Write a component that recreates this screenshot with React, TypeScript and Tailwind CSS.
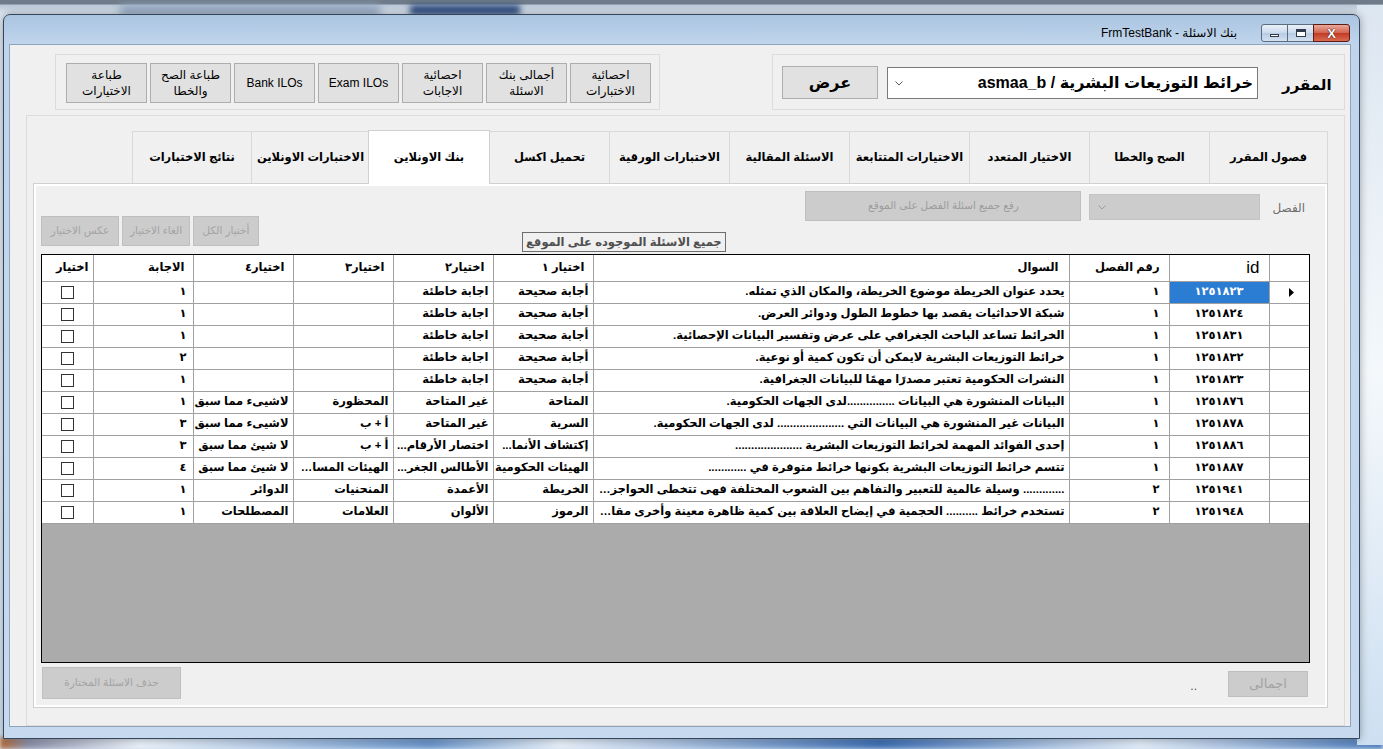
import React from "react";

type Row = {
  id: string;
  ch: string;
  q: string;
  a1: string;
  a2: string;
  a3: string;
  a4: string;
  ans: string;
};

const ROWS: Row[] = [
  { id: "١٢٥١٨٢٣", ch: "١", q: "يحدد عنوان الخريطة موضوع الخريطة، والمكان الذي تمثله.", a1: "أجابة صحيحة", a2: "اجابة خاطئة", a3: "", a4: "", ans: "١" },
  { id: "١٢٥١٨٢٤", ch: "١", q: "شبكة الاحداثيات يقصد بها خطوط الطول ودوائر العرض.", a1: "أجابة صحيحة", a2: "اجابة خاطئة", a3: "", a4: "", ans: "١" },
  { id: "١٢٥١٨٣١", ch: "١", q: "الخرائط تساعد الباحث الجغرافي على عرض وتفسير البيانات الإحصائية.", a1: "أجابة صحيحة", a2: "اجابة خاطئة", a3: "", a4: "", ans: "١" },
  { id: "١٢٥١٨٣٢", ch: "١", q: "خرائط التوزيعات البشرية لايمكن أن تكون كمية أو نوعية.", a1: "أجابة صحيحة", a2: "اجابة خاطئة", a3: "", a4: "", ans: "٢" },
  { id: "١٢٥١٨٣٣", ch: "١", q: "النشرات الحكومية تعتبر مصدرًا مهمًا للبيانات الجغرافية.", a1: "أجابة صحيحة", a2: "اجابة خاطئة", a3: "", a4: "", ans: "١" },
  { id: "١٢٥١٨٧٦", ch: "١", q: "البيانات المنشورة هي البيانات ...............لدى الجهات الحكومية.", a1: "المتاحة", a2: "غير المتاحة", a3: "المحظورة", a4: "لاشيىء مما سبق", ans: "١" },
  { id: "١٢٥١٨٧٨", ch: "١", q: "البيانات غير المنشورة هي البيانات التي ..................... لدى الجهات الحكومية.", a1: "السرية", a2: "غير المتاحة", a3: "أ + ب", a4: "لاشيىء مما سبق", ans: "٣" },
  { id: "١٢٥١٨٨٦", ch: "١", q: "إحدى الفوائد المهمة لخرائط التوزيعات البشرية .....................", a1: "إكتشاف الأنما...", a2: "اختصار الأرقام...", a3: "أ + ب", a4: "لا شيئ مما سبق", ans: "٣" },
  { id: "١٢٥١٨٨٧", ch: "١", q: "تتسم خرائط التوزيعات البشرية بكونها خرائط متوفرة في ............", a1: "الهيئات الحكومية", a2: "الأطالس الجغر...", a3: "الهيئات المساحية", a4: "لا شيئ مما سبق", ans: "٤" },
  { id: "١٢٥١٩٤١", ch: "٢", q: "............. وسيلة عالمية للتعبير والتفاهم بين الشعوب المختلفة فهى تتخطى الحواجز اللغوية", a1: "الخريطة", a2: "الأعمدة", a3: "المنحنيات", a4: "الدوائر", ans: "١" },
  { id: "١٢٥١٩٤٨", ch: "٢", q: "تستخدم خرائط .......... الحجمية في إيضاح العلاقة بين كمية ظاهرة معينة وأخرى مقارنة بها", a1: "الرموز", a2: "الألوان", a3: "العلامات", a4: "المصطلحات", ans: "١" },
];

// top toolbar, left to right
const TOOLBAR: string[][] = [
  ["طباعة", "الاختيارات"],
  ["طباعة الصح", "والخطا"],
  ["Bank ILOs"],
  ["Exam ILOs"],
  ["احصائية", "الاجابات"],
  ["أجمالى بنك", "الاسئلة"],
  ["احصائية", "الاختبارات"],
];

// tabs, right to left
const TABS: { label: string; w: string }[] = [
  { label: "فصول المقرر", w: "w-[119px]" },
  { label: "الصح والخطا", w: "w-[120px]" },
  { label: "الاختيار المتعدد", w: "w-[120px]" },
  { label: "الاختيارات المتتابعة", w: "w-[120px]" },
  { label: "الاسئلة المقالية", w: "w-[120px]" },
  { label: "الاختبارات الورقية", w: "w-[120px]" },
  { label: "تحميل اكسل", w: "w-[120px]" },
  { label: "بنك الاونلاين", w: "w-[122px]" },
  { label: "الاختبارات الاونلاين", w: "w-[118px]" },
  { label: "نتائج الاختبارات", w: "w-[119px]" },
];
const ACTIVE_TAB = 7;

const cellBase = "h-[22px] overflow-hidden text-ellipsis whitespace-nowrap border-b border-l border-[#a0a0a0] p-0 align-middle";

function TitleBar() {
  return (
    <div className="flex h-[29px] items-start justify-end pr-[9px]">
      <span dir="ltr" className="mr-[24px] mt-[11px] text-[12px] leading-[14px] text-black">
        FrmTestBank - بنك الاسئلة
      </span>
      <div className="mt-[9px] flex h-[18px]">
        <div className="flex h-full w-[27px] items-end justify-center rounded-l-[3px] border border-[#5b6b80] bg-[linear-gradient(180deg,#e9f0f8,#cbdaec_50%,#b7cbe3_51%,#d3e1f1)] pb-[4px]">
          <span className="h-[3px] w-[9px] border border-[#2f3b4a] bg-white" />
        </div>
        <div className="-ml-px flex h-full w-[27px] items-center justify-center border border-[#5b6b80] bg-[linear-gradient(180deg,#e9f0f8,#cbdaec_50%,#b7cbe3_51%,#d3e1f1)]">
          <span className="h-[8px] w-[10px] border border-t-[3px] border-[#2f3b4a] bg-white" />
        </div>
        <div className="-ml-px flex h-full w-[37px] items-center justify-center rounded-r-[3px] border border-[#5e1b14] bg-[linear-gradient(180deg,#e9a99b,#d2624f_50%,#c13a26_51%,#d96b4f)]">
          <span className="text-[13px] font-bold leading-none text-white [text-shadow:0_0_1px_#3a0a05,0_0_1px_#3a0a05]">X</span>
        </div>
      </div>
    </div>
  );
}

function TopBar() {
  return (
    <div className="flex h-[56px] justify-between pl-[45px] pr-[5px]">
      <div className="flex w-[605px] gap-[3px] border border-[#dcdcdc] pl-[10px] pt-[8px]">
        {TOOLBAR.map((lines, i) => (
          <button
            key={i}
            type="button"
            className="flex h-[40px] w-[81px] flex-col items-center justify-center border border-[#adadad] bg-[#e1e1e1] text-[12px] leading-[16px] text-black"
          >
            {lines.map((l) => (
              <span key={l}>{l}</span>
            ))}
          </button>
        ))}
      </div>
      <div className="flex w-[573px] items-start border border-[#dcdcdc] pl-[9px]">
        <button
          type="button"
          className="mt-[11px] h-[33px] w-[96px] border border-[#adadad] bg-[#e1e1e1] text-[16px] font-bold text-black"
        >
          عرض
        </button>
        <div className="ml-[9px] mt-[12px] flex h-[32px] w-[371px] items-center border border-[#7a7a7a] bg-white pl-[7px] pr-[4px]">
          <svg width="8" height="5" viewBox="0 0 8 5" className="shrink-0">
            <path d="M0.5 0.5 L4 4 L7.5 0.5" fill="none" stroke="#555" strokeWidth="1" />
          </svg>
          <span dir="rtl" className="flex-1 whitespace-nowrap text-right text-[16px] font-bold text-black">
            خرائط التوزيعات البشرية / asmaa_b
          </span>
        </div>
        <span className="ml-[24px] mt-[19px] text-[15px] font-bold text-black">المقرر</span>
      </div>
    </div>
  );
}

function Tabs() {
  return (
    <div dir="rtl" className="flex h-[52px] shrink-0">
      {TABS.map((t, i) =>
        i === ACTIVE_TAB ? (
          <div
            key={t.label}
            className={`${t.w} relative z-10 -mx-px -mt-px flex h-[54px] items-center justify-center whitespace-nowrap border border-b-0 border-[#d0d0d0] bg-white text-[11.5px] font-bold text-black`}
          >
            {t.label}
          </div>
        ) : (
          <div
            key={t.label}
            className={`${t.w} flex h-[52px] items-center justify-center whitespace-nowrap border-l border-t border-[#d9d9d9] bg-[#f0f0f0] text-[11.5px] font-bold text-black ${i === 0 ? "border-r" : ""}`}
          >
            {t.label}
          </div>
        ),
      )}
    </div>
  );
}

function FilterBar() {
  return (
    <div className="flex h-[68px] shrink-0 items-start">
      <div className="mt-[30px] flex gap-[3px]">
        {["عكس الاختيار", "الغاء الاختيار", "أختيار الكل"].map((l, i) => (
          <button
            key={l}
            type="button"
            className={`h-[30px] ${i === 0 ? "w-[78px]" : i === 1 ? "w-[68px]" : "w-[66px]"} whitespace-nowrap border border-[#bfbfbf] bg-[#cccccc] text-[10.5px] text-[#a3a3a3]`}
          >
            {l}
          </button>
        ))}
      </div>
      <span className="ml-[263px] mt-[46px] h-[20px] whitespace-nowrap border border-[#6d6d6d] px-[3px] text-[11.5px] font-bold leading-[18px] text-[#4f4f4f]">
        جميع الاسئلة الموجوده على الموقع
      </span>
      <div className="flex-1" />
      <button
        type="button"
        className="mt-[5px] h-[30px] w-[276px] border border-[#bfbfbf] bg-[#cccccc] text-[10.5px] text-[#9c9c9c]"
      >
        رفع جميع اسئلة الفصل على الموقع
      </button>
      <div className="ml-[8px] mt-[8px] flex h-[26px] w-[171px] items-center border border-[#c4c4c4] bg-[#cccccc] pl-[8px]">
        <svg width="8" height="5" viewBox="0 0 8 5">
          <path d="M0.5 0.5 L4 4 L7.5 0.5" fill="none" stroke="#9a9a9a" strokeWidth="1" />
        </svg>
      </div>
      <span className="ml-[12px] mr-[5px] mt-[13px] text-[12px] text-[#6d6d6d]">الفصل</span>
    </div>
  );
}

function Grid() {
  const th = "h-[26px] border-b border-l border-[#a0a0a0] p-0 text-right align-middle font-bold text-[11.5px] whitespace-nowrap overflow-hidden";
  return (
    <div className="h-[409px] shrink-0 overflow-hidden border border-black bg-[#ababab]">
      <table dir="rtl" className="w-[1267px] table-fixed border-collapse bg-white text-[11.5px] font-bold text-black">
        <colgroup>
          <col className="w-[40px]" />
          <col className="w-[100px]" />
          <col className="w-[100px]" />
          <col className="w-[476px]" />
          <col className="w-[100px]" />
          <col className="w-[100px]" />
          <col className="w-[100px]" />
          <col className="w-[100px]" />
          <col className="w-[100px]" />
          <col className="w-[51px]" />
        </colgroup>
        <thead>
          <tr>
            <th className={th} />
            <th className={`${th} pr-[9px] text-[17px] font-normal`}>id</th>
            <th className={`${th} pr-[9px]`}>رقم الفصل</th>
            <th className={`${th} pr-[10px]`}>السوال</th>
            <th className={`${th} pr-[8px]`}>اختيار ١</th>
            <th className={`${th} pr-[8px]`}>اختيار٢</th>
            <th className={`${th} pr-[8px]`}>اختيار٣</th>
            <th className={`${th} pr-[8px]`}>اختيار٤</th>
            <th className={`${th} pr-[8px]`}>الاجابة</th>
            <th className={`${th} border-l-0 pr-[4px]`}>اختيار</th>
          </tr>
        </thead>
        <tbody>
          {ROWS.map((r, i) => (
            <tr key={r.id}>
              <td className={`${cellBase} text-center`}>
                {i === 0 && (
                  <svg width="5" height="9" viewBox="0 0 5 9" className="ml-[4px] inline-block">
                    <path d="M0 0 L5 4.5 L0 9 Z" fill="#000" />
                  </svg>
                )}
              </td>
              <td className={`${cellBase} text-center ${i === 0 ? "bg-[#2b7cd3] text-white" : ""}`}>{r.id}</td>
              <td className={`${cellBase} pr-[9px] text-right`}>{r.ch}</td>
              <td className={`${cellBase} pl-[3px] pr-[4px] text-right`}>{r.q}</td>
              <td className={`${cellBase} pr-[4px] text-right`}>{r.a1}</td>
              <td className={`${cellBase} pr-[4px] text-right`}>{r.a2}</td>
              <td className={`${cellBase} pr-[4px] text-right`}>{r.a3}</td>
              <td className={`${cellBase} pr-[4px] text-right`}>{r.a4}</td>
              <td className={`${cellBase} pr-[6px] text-right`}>{r.ans}</td>
              <td className={`${cellBase} border-l-0 text-center`}>
                <span className="inline-block h-[13px] w-[13px] border border-[#333] bg-white align-middle" />
              </td>
            </tr>
          ))}
        </tbody>
      </table>
    </div>
  );
}

function Footer() {
  return (
    <div className="flex flex-1 items-start">
      <button
        type="button"
        className="ml-px mt-[4px] h-[32px] w-[139px] border border-[#bfbfbf] bg-[#cccccc] text-[10.5px] text-[#a3a3a3]"
      >
        حذف الاسئلة المختارة
      </button>
      <div className="flex-1" />
      <span className="mt-[14px] text-[12px] text-[#555]">..</span>
      <button
        type="button"
        className="ml-[31px] mr-[2px] mt-[8px] h-[26px] w-[80px] border border-[#bfbfbf] bg-[#cccccc] text-[13px] text-[#a3a3a3]"
      >
        اجمالى
      </button>
    </div>
  );
}

export default function App() {
  return (
    <div className="relative h-[749px] w-[1383px] overflow-hidden bg-[linear-gradient(180deg,#6f7b88_0px,#6f7b88_4px,#b9c7d7_5px,#dfe8f2_14px,#e8eff7_60%,#d2e2f3_100%)] font-['Liberation_Sans','DejaVu_Sans',sans-serif]">
      {/* wallpaper */}
      <div className="absolute left-[410px] top-[5px] h-[10px] w-[110px] bg-[#2c4a7e] blur-[3px]" />
      <div className="absolute left-[120px] top-[5px] h-[10px] w-[260px] bg-[#8ea3bf] blur-[4px]" />
      <div className="absolute bottom-0 left-0 h-[12px] w-full bg-[linear-gradient(90deg,#b66a38_0px,#8b8fa8_28px,#e9f0f8_140px,#6a94c9_430px,#e6eef7_560px,#3f6fb2_880px,#dfe9f5_1140px,#4d7bba_1383px)] blur-[2px]" />
      <div className="absolute right-0 top-[5px] h-[740px] w-[26px] bg-[linear-gradient(180deg,#dce6f1,#f4f8fb_50%,#cddff1)]" />

      <div className="absolute left-[3px] top-[14px] flex h-[725px] w-[1357px] flex-col rounded-t-[7px] border border-[#34465c] bg-[linear-gradient(180deg,#aac4e0_0px,#c0d5ec_29px,#c6d9ee_100%)] shadow-[0_0_8px_rgba(0,0,0,0.35)]">
        <TitleBar />
        <div className="mb-[11px] ml-[5px] mr-[8px] flex flex-1 flex-col border border-[#8fa3ba] bg-[#f0f0f0] pt-[9px]">
          <TopBar />
          <div className="ml-[16px] mr-[5px] mt-[5px] flex flex-1 flex-col border border-[#dcdcdc] pb-[17px] pl-[6px] pr-[16px] pt-[15px]">
            <Tabs />
            <div className="flex flex-1 flex-col border border-[#d0d0d0] bg-white p-[2px]">
              <div className="flex flex-1 flex-col bg-[#f0f0f0] pl-[5px] pr-[15px]">
                <FilterBar />
                <Grid />
                <Footer />
              </div>
            </div>
          </div>
        </div>
      </div>
    </div>
  );
}
